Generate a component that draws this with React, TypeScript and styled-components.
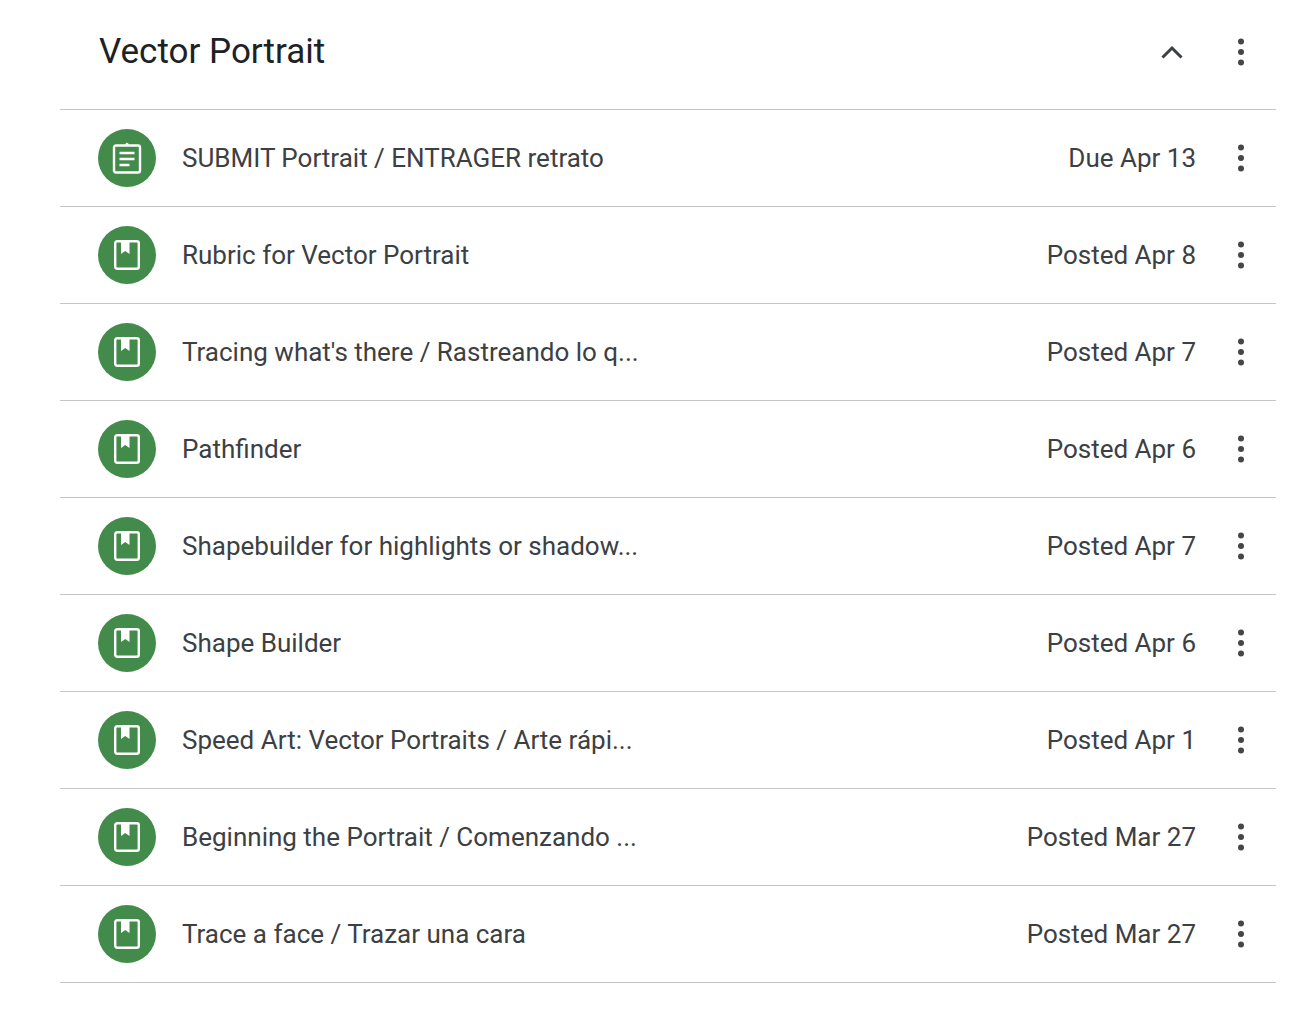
import styled, { createGlobalStyle } from 'styled-components';

const Global = createGlobalStyle`
  html, body {
    margin: 0;
    background: #fff;
  }
`;

const Wrapper = styled.div`
  width: 1216px;
  margin-left: 60px;
  font-family: Roboto, "Liberation Sans", sans-serif;
`;

const Header = styled.div`
  height: 109px;
  display: flex;
  align-items: center;
  padding: 0 24px 6px 39px;
  box-sizing: border-box;
  border-bottom: 1px solid #c4c6c8;
  height: 110px;
`;

const Title = styled.div`
  flex: 1;
  font-size: 35px;
  line-height: 44px;
  color: #202124;
`;

const Chevron = styled.svg`
  width: 24px;
  height: 16px;
  margin-right: 46px;
  fill: none;
  stroke: #3c4043;
  stroke-width: 3;
`;

const Row = styled.div`
  height: 97px;
  box-sizing: border-box;
  display: flex;
  align-items: center;
  padding: 0 24px 0 38px;
  border-bottom: 1px solid #c4c6c8;
`;

const IconCircle = styled.div`
  width: 58px;
  height: 58px;
  flex: none;
  border-radius: 50%;
  background: #438b4a;
  display: flex;
  align-items: center;
  justify-content: center;
  margin-right: 26px;
`;

const RowTitle = styled.div`
  flex: 1;
  font-size: 26px;
  line-height: 34px;
  color: #3c4043;
`;

const RowDate = styled.div`
  font-size: 26px;
  line-height: 34px;
  color: #3c4043;
  margin-right: 34px;
`;

const DotsIcon = styled.svg`
  width: 22px;
  height: 28px;
  flex: none;
  fill: #444746;
`;

const Glyph = styled.svg`
  width: 34px;
  height: 34px;
  fill: none;
  stroke: #fff;
`;

const Dots = () => (
  <DotsIcon viewBox="0 0 22 28">
    <circle cx="11" cy="3.5" r="3" />
    <circle cx="11" cy="14" r="3" />
    <circle cx="11" cy="24.5" r="3" />
  </DotsIcon>
);

const AssignmentIcon = () => (
  <Glyph viewBox="0 0 34 34">
    <rect x="4" y="4.5" width="26" height="27" rx="2" strokeWidth="2.4" />
    <circle cx="17" cy="3.4" r="1.6" fill="#fff" stroke="none" />
    <path d="M12 2.5h10v3H12z" fill="none" stroke="none" />
    <path d="M9.5 12h15M9.5 18h15M9.5 24h10" strokeWidth="2.6" />
  </Glyph>
);

const MaterialIcon = () => (
  <Glyph viewBox="0 0 34 34">
    <rect x="5.2" y="3.2" width="23.6" height="27.6" rx="2" strokeWidth="2.4" />
    <path d="M11 3.5h8.5v12.5l-4.25-3-4.25 3z" fill="#fff" stroke="none" />
  </Glyph>
);

const items = [
  { title: 'SUBMIT Portrait / ENTRAGER retrato', date: 'Due Apr 13', kind: 'assignment' },
  { title: 'Rubric for Vector Portrait', date: 'Posted Apr 8', kind: 'material' },
  { title: "Tracing what's there / Rastreando lo q...", date: 'Posted Apr 7', kind: 'material' },
  { title: 'Pathfinder', date: 'Posted Apr 6', kind: 'material' },
  { title: 'Shapebuilder for highlights or shadow...', date: 'Posted Apr 7', kind: 'material' },
  { title: 'Shape Builder', date: 'Posted Apr 6', kind: 'material' },
  { title: 'Speed Art: Vector Portraits / Arte rápi...', date: 'Posted Apr 1', kind: 'material' },
  { title: 'Beginning the Portrait / Comenzando ...', date: 'Posted Mar 27', kind: 'material' },
  { title: 'Trace a face / Trazar una cara', date: 'Posted Mar 27', kind: 'material' },
];

export default function App() {
  return (
    <>
      <Global />
      <Wrapper>
        <Header>
          <Title>Vector Portrait</Title>
          <Chevron viewBox="0 0 24 16">
            <path d="M2.5 13.5 12 4l9.5 9.5" />
          </Chevron>
          <Dots />
        </Header>
        {items.map((item) => (
          <Row key={item.title}>
            <IconCircle>
              {item.kind === 'assignment' ? <AssignmentIcon /> : <MaterialIcon />}
            </IconCircle>
            <RowTitle>{item.title}</RowTitle>
            <RowDate>{item.date}</RowDate>
            <Dots />
          </Row>
        ))}
      </Wrapper>
    </>
  );
}
